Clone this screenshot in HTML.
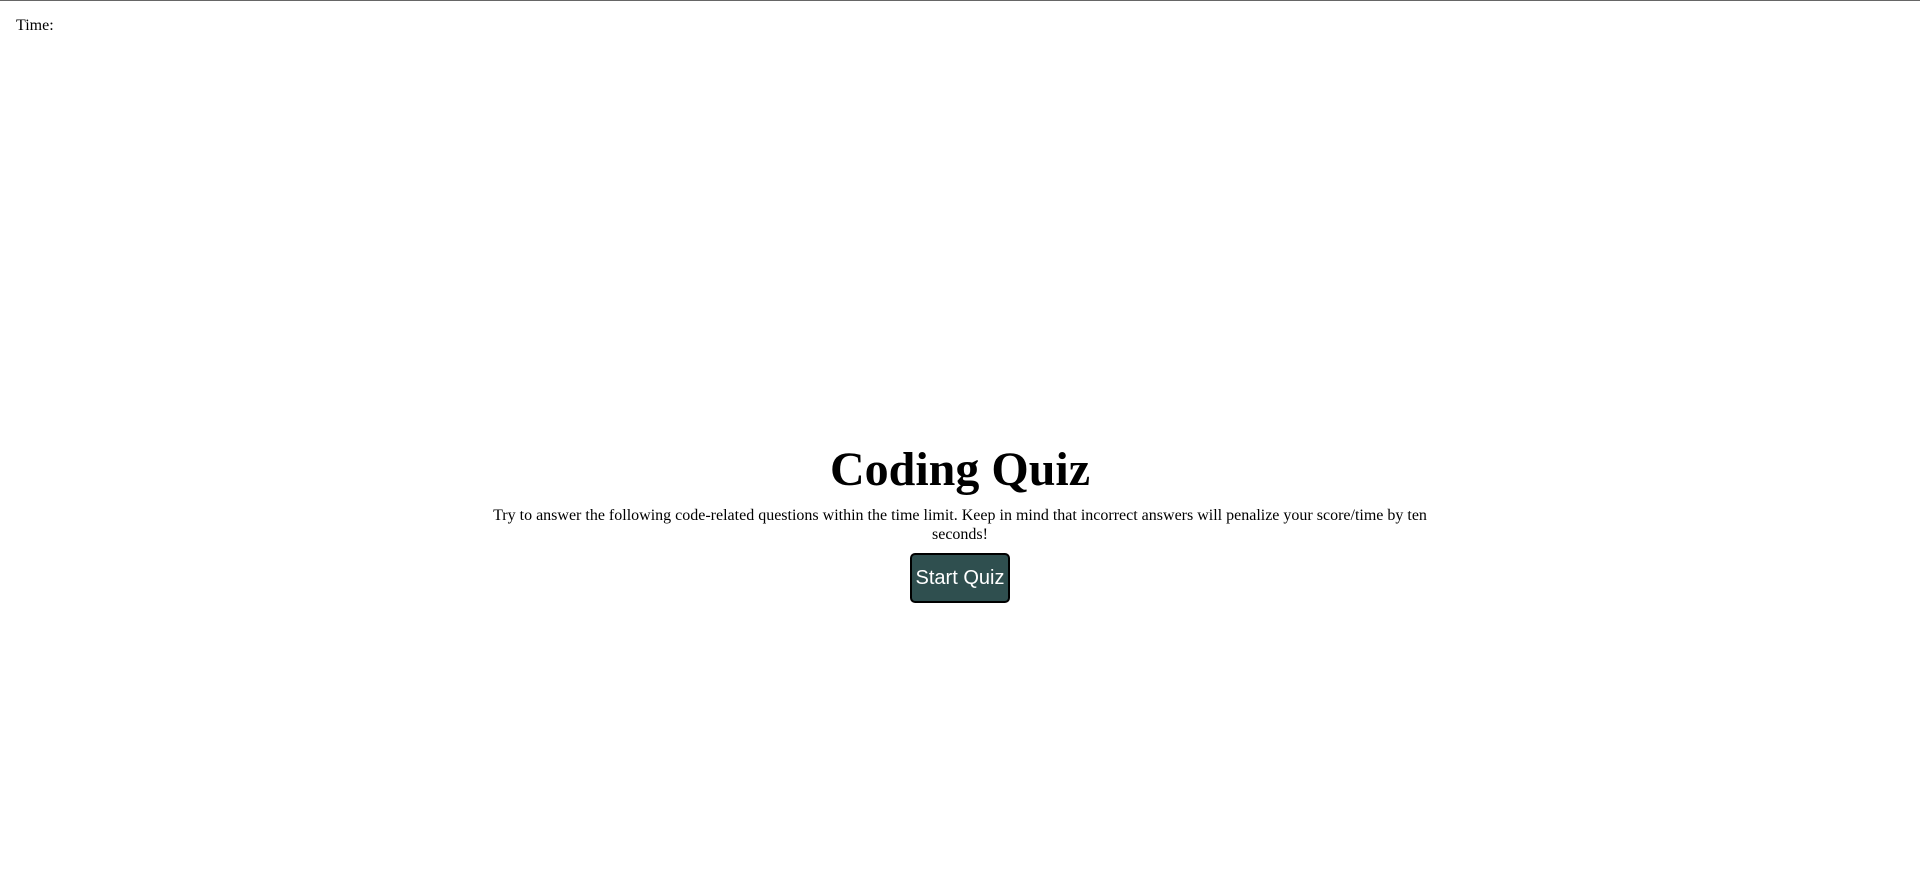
<!DOCTYPE html>
<html><head><meta charset="utf-8"><style>
html,body{margin:0;padding:0;background:#fff;}
body{width:1920px;height:881px;position:relative;overflow:hidden;font-family:"Liberation Serif",serif;color:#000;border-top:1px solid #666;box-sizing:border-box;}
#t{position:absolute;left:16px;top:15px;font-size:16px;line-height:19px;}
h1{position:absolute;left:0;width:1920px;top:441px;margin:0;text-align:center;font-size:48px;line-height:55px;font-weight:bold;}
p{position:absolute;left:480px;width:960px;top:505px;margin:0;text-align:center;font-size:16px;line-height:19px;}
button{position:absolute;left:910px;top:552px;width:100px;height:50px;background:#2f4f4f;color:#fff;border:2px solid #000;border-radius:5px;font-family:"Liberation Sans",sans-serif;font-size:20px;padding:0;box-sizing:border-box;}
</style></head><body>
<div id="t">Time:</div>
<h1>Coding Quiz</h1>
<p>Try to answer the following code-related questions within the time limit. Keep in mind that incorrect answers will penalize your score/time by ten seconds!</p>
<button>Start Quiz</button>
</body></html>
